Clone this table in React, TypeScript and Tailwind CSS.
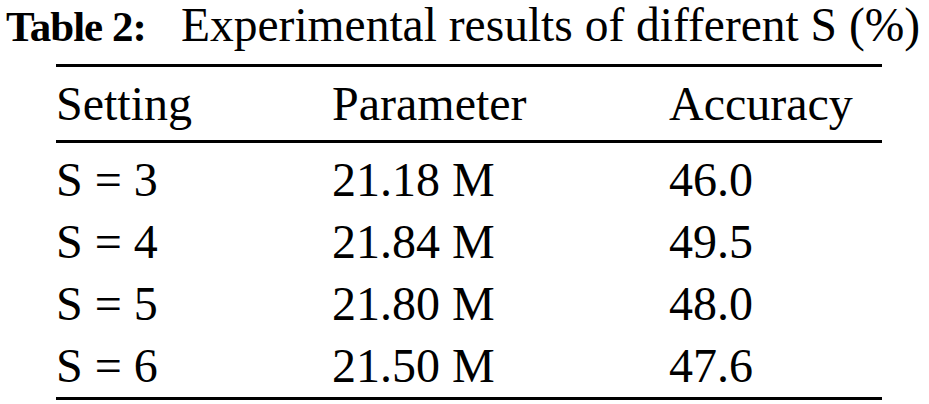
import React from 'react';

const rows = [
    { setting: 'S = 3', param: '21.18 M', acc: '46.0' },
    { setting: 'S = 4', param: '21.84 M', acc: '49.5' },
    { setting: 'S = 5', param: '21.80 M', acc: '48.0' },
    { setting: 'S = 6', param: '21.50 M', acc: '47.6' },
];

export default function App() {
    return (
        <div
            className="w-[929px] h-[404px] bg-white text-black overflow-hidden"
            style={{ fontFamily: '"Liberation Serif", "Times New Roman", serif' }}
        >
            {/* Caption */}
            <div className="flex items-baseline pl-[6px] pt-[3px] h-[48px] leading-[45px] whitespace-nowrap">
                <span className="w-[175px] shrink-0 font-bold text-[43px] tracking-[-1px]">Table 2:</span>
                <span className="text-[47.5px]">Experimental results of different S (%)</span>
            </div>

            {/* Table */}
            <div className="ml-[56px] w-[826px] mt-[16px] border-t-[3px] border-b-[3px] border-black text-[48px]">
                <div className="grid grid-cols-[276px_337px_1fr] pt-[6px] pb-[5px] leading-[62px] border-b-[3px] border-black">
                    <div>Setting</div>
                    <div>Parameter</div>
                    <div>Accuracy</div>
                </div>
                <div className="pt-[6px]">
                    {rows.map((r) => (
                        <div key={r.setting} className="grid grid-cols-[276px_337px_1fr] leading-[62px]">
                            <div>{r.setting}</div>
                            <div>{r.param}</div>
                            <div>{r.acc}</div>
                        </div>
                    ))}
                </div>
            </div>
        </div>
    );
}
